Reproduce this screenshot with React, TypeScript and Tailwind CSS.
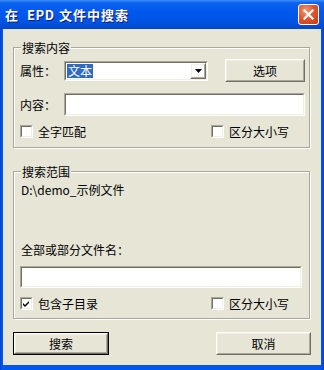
import React from "react";

const font = "font-['SimSun','Noto_Sans_CJK_SC','Noto_Sans',sans-serif]";

function Sunken({ className = "", children }: { className?: string; children?: React.ReactNode }) {
  return (
    <div className={`border border-t-[#ACA899] border-l-[#ACA899] border-b-white border-r-white ${className}`}>
      <div className="h-full w-full border border-t-[#716F64] border-l-[#716F64] border-b-[#F1EFE2] border-r-[#F1EFE2] bg-white flex items-center">
        {children}
      </div>
    </div>
  );
}

function Raised({ className = "", children, def = false }: { className?: string; children?: React.ReactNode; def?: boolean }) {
  const inner = (
    <div className="h-full w-full border border-t-white border-l-white border-b-[#716F64] border-r-[#716F64]">
      <div className="h-full w-full border border-t-[#F1EFE2] border-l-[#F1EFE2] border-b-[#ACA899] border-r-[#ACA899] flex items-center justify-center">
        {children}
      </div>
    </div>
  );
  if (def) return <div className={`border border-black ${className}`}>{inner}</div>;
  return <div className={className}>{inner}</div>;
}

function Check({ checked = false }: { checked?: boolean }) {
  return (
    <div className="w-[13px] h-[13px] shrink-0 border border-t-[#ACA899] border-l-[#ACA899] border-b-white border-r-white">
      <div className="h-full w-full border border-t-[#716F64] border-l-[#716F64] border-b-[#F1EFE2] border-r-[#F1EFE2] bg-white relative">
        {checked && (
          <svg width="9" height="9" viewBox="0 0 9 9" className="absolute left-0 top-0">
            <path d="M1 4 L3 6 L7 2 L7 4 L3 8 L1 6 Z" fill="#000" />
          </svg>
        )}
      </div>
    </div>
  );
}

function Group({ title, className = "", children }: { title: string; className?: string; children?: React.ReactNode }) {
  return (
    <div className={`relative w-[297px] border border-[#ACA899] shadow-[inset_1px_1px_0_#fff,1px_1px_0_#fff] ${className}`}>
      <span className="absolute left-[7px] top-[-8px] px-[1px] bg-[#E6E5D6] text-[12px] leading-[16px] text-black">{title}</span>
      {children}
    </div>
  );
}

export default function App() {
  return (
    <div className={`w-[324px] h-[370px] flex flex-col bg-[linear-gradient(to_right,#0A3FC8_0px,#0058EE_2px,#0058EE_321px,#0A3FC8_324px)] ${font} text-[12px] text-black`}>
      <div className="h-[29px] shrink-0 flex items-center justify-between bg-[linear-gradient(to_bottom,#3D8DF9_0px,#0C62EE_3px,#0058EE_12px,#0054E3_22px,#0046C8_29px)]">
        <div className="pl-[5px] flex items-center text-[13px] font-bold text-white whitespace-nowrap [text-shadow:1px_1px_0_#0A1A70]">
          <span>在</span>
          <span className="ml-[9px] inline-block w-[24px] tracking-[0.5px]">EPD</span>
          <span className="ml-[8px] tracking-[1px]">文件中搜索</span>
        </div>
        <div className="mr-[5px] w-[21px] h-[21px] rounded-[3px] border border-white bg-[radial-gradient(circle_at_35%_30%,#F09A7C_0%,#E0582F_45%,#C23A16_100%)] flex items-center justify-center">
          <svg width="11" height="11" viewBox="0 0 11 11">
            <path d="M1.5 1.5 L9.5 9.5 M9.5 1.5 L1.5 9.5" stroke="#fff" strokeWidth="2.2" strokeLinecap="square" />
          </svg>
        </div>
      </div>
      <div className="flex-1 mx-[3px] mb-[5px] bg-[#E6E5D6] flex flex-col pl-[10px] pt-[18px]">
        <Group title="搜索内容">
          <div className="flex items-center h-[23px] mt-[11px] pl-[6px]">
            <span className="w-[44px] leading-[16px]">属性：</span>
            <div className="w-[144px] h-[20px] border border-t-[#ACA899] border-l-[#ACA899] border-b-white border-r-white">
              <div className="h-full w-full border border-t-[#716F64] border-l-[#716F64] border-b-[#F1EFE2] border-r-[#F1EFE2] bg-white flex items-center justify-between">
                <span className="ml-[1px] px-[1px] bg-[#316AC5] text-white leading-[14px]">文本</span>
                <Raised className="w-[16px] h-[16px]">
                  <svg width="7" height="4" viewBox="0 0 7 4"><path d="M0 0 H7 L3.5 4 Z" fill="#000" /></svg>
                </Raised>
              </div>
            </div>
            <Raised className="ml-[17px] w-[80px] h-[23px]">
              <span className="leading-[16px]">选项</span>
            </Raised>
          </div>
          <div className="flex items-center h-[23px] mt-[11px] pl-[6px]">
            <span className="w-[44px] leading-[16px]">内容：</span>
            <Sunken className="w-[241px] h-[23px]" />
          </div>
          <div className="flex items-center h-[13px] mt-[9px] mb-[9px] pl-[6px]">
            <Check />
            <span className="ml-[5px] leading-[16px] w-[173px]">全字匹配</span>
            <Check />
            <span className="ml-[5px] leading-[16px]">区分大小写</span>
          </div>
        </Group>
        <Group title="搜索范围" className="mt-[23px]">
          <div className="pl-[7px] mt-[10px] leading-[16px] h-[16px]">D:\demo_示例文件</div>
          <div className="pl-[7px] mt-[44px] leading-[16px] h-[16px]">全部或部分文件名：</div>
          <div className="pl-[6px] mt-[8px]">
            <Sunken className="w-[282px] h-[22px]" />
          </div>
          <div className="flex items-center h-[13px] mt-[9px] mb-[8px] pl-[6px]">
            <Check checked />
            <span className="ml-[5px] leading-[16px] w-[173px]">包含子目录</span>
            <Check />
            <span className="ml-[5px] leading-[16px]">区分大小写</span>
          </div>
        </Group>
        <div className="flex mt-[13px] w-[297px] justify-between">
          <Raised def className="w-[96px] h-[23px]">
            <span className="leading-[16px]">搜索</span>
          </Raised>
          <Raised className="w-[95px] h-[23px] mr-[-1px]">
            <span className="leading-[16px]">取消</span>
          </Raised>
        </div>
      </div>
    </div>
  );
}
